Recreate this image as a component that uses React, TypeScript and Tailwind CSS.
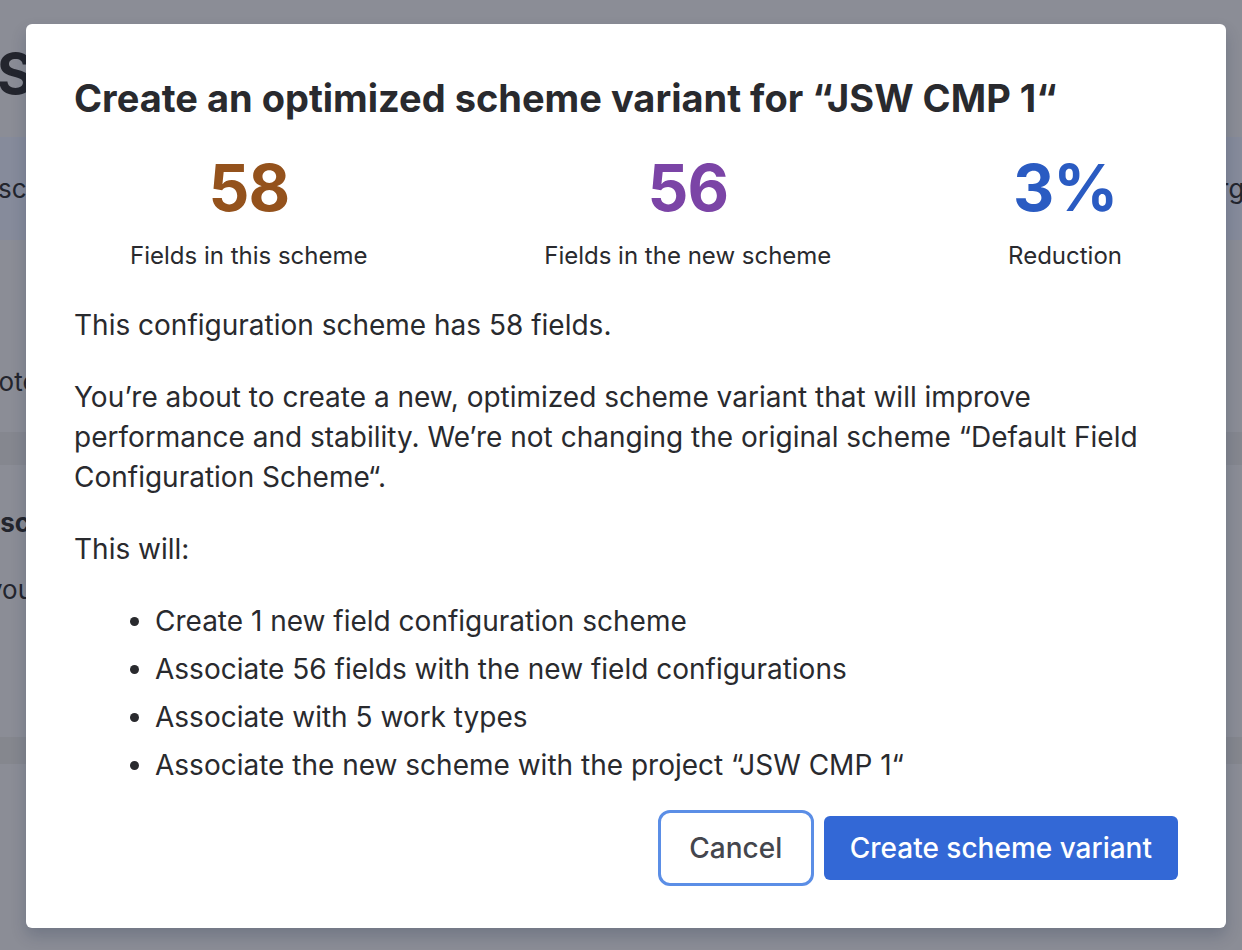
import React from 'react';

const stats = [
  { value: '58', label: 'Fields in this scheme', color: 'text-[#94521c]' },
  { value: '56', label: 'Fields in the new scheme', color: 'text-[#7b44a6]' },
  { value: '3%', label: 'Reduction', color: 'text-[#2a5bc2]' },
];

const steps = [
  'Create 1 new field configuration scheme',
  'Associate 56 fields with the new field configurations',
  'Associate with 5 work types',
  'Associate the new scheme with the project \u201cJSW CMP 1\u201c',
];

function BackgroundPage() {
  // page behind the blanket, already dimmed
  return (
    <div className="h-[950px] w-full overflow-hidden bg-[#8b8d96] text-[#23252d]">
      <div className="h-[137px] pt-[44px]">
        <h1 className="text-[56px] font-bold leading-[60px] ml-[-3px]">Schemes</h1>
      </div>
      <div className="h-[103px] bg-[#868b9b] flex items-center justify-between text-[26px]">
        <span className="ml-[-2px]">scheme</span>
        <span className="mr-[-26px]">Target</span>
      </div>
      <div className="h-[192px] flex items-center text-[26px]">
        <span className="ml-[-21px] mt-[90px]">Note</span>
      </div>
      <div className="h-[33px] bg-[#85878f]" />
      <div className="h-[272px] pt-[38px] text-[26px]">
        <div className="font-bold ml-[-34px] leading-[40px]">Describe</div>
        <div className="ml-[-12px] mt-[27px] leading-[40px]">you</div>
      </div>
      <div className="h-[27px] bg-[#85878e]" />
    </div>
  );
}

export default function App() {
  return (
    <div className="relative h-[950px] w-[1242px] overflow-hidden" style={{ fontFamily: 'Inter, "Noto Sans", sans-serif' }}>
      <BackgroundPage />

      <div className="absolute left-[26px] top-[24px] w-[1200px] h-[904px] bg-white rounded-[6px] shadow-[0_8px_16px_rgba(9,30,66,0.2)] px-12 pt-[52px] pb-12 flex flex-col text-[#292a2e]">
        <h2 className="text-[38px] font-bold leading-[44px]">
          Create an optimized scheme variant for {'\u201c'}JSW CMP 1{'\u201c'}
        </h2>

        <div className="mt-8 px-14 flex justify-between">
          {stats.map((s) => (
            <div key={s.label} className="flex flex-col items-center">
              <div className={`text-[64px] font-bold leading-[72px] tracking-[-1px] ${s.color}`}>{s.value}</div>
              <div className="mt-4 text-[24px] leading-[32px]">{s.label}</div>
            </div>
          ))}
        </div>

        <div className="mt-[33px] text-[28px] leading-[40px] flex flex-col gap-8">
          <p>This configuration scheme has 58 fields.</p>
          <p>
            You{'\u2019'}re about to create a new, optimized scheme variant that will improve performance and stability. We{'\u2019'}re not changing the original scheme {'\u201c'}Default Field Configuration Scheme{'\u201c'}.
          </p>
          <p>This will:</p>
        </div>

        <ul className="mt-8 list-disc pl-[81px] text-[28px] leading-[40px] flex flex-col gap-2">
          {steps.map((s) => (
            <li key={s}>{s}</li>
          ))}
        </ul>

        <div className="mt-[31px] flex items-center justify-end gap-4">
          <button className="h-16 w-[144px] rounded-[6px] text-[28px] font-medium text-[#44464d] outline-[3px] outline-solid outline-offset-[3px] outline-[#5b8ee6]">
            Cancel
          </button>
          <button className="h-16 px-[26px] rounded-[6px] bg-[#3368d6] text-[28px] font-medium text-white">
            Create scheme variant
          </button>
        </div>
      </div>
    </div>
  );
}
